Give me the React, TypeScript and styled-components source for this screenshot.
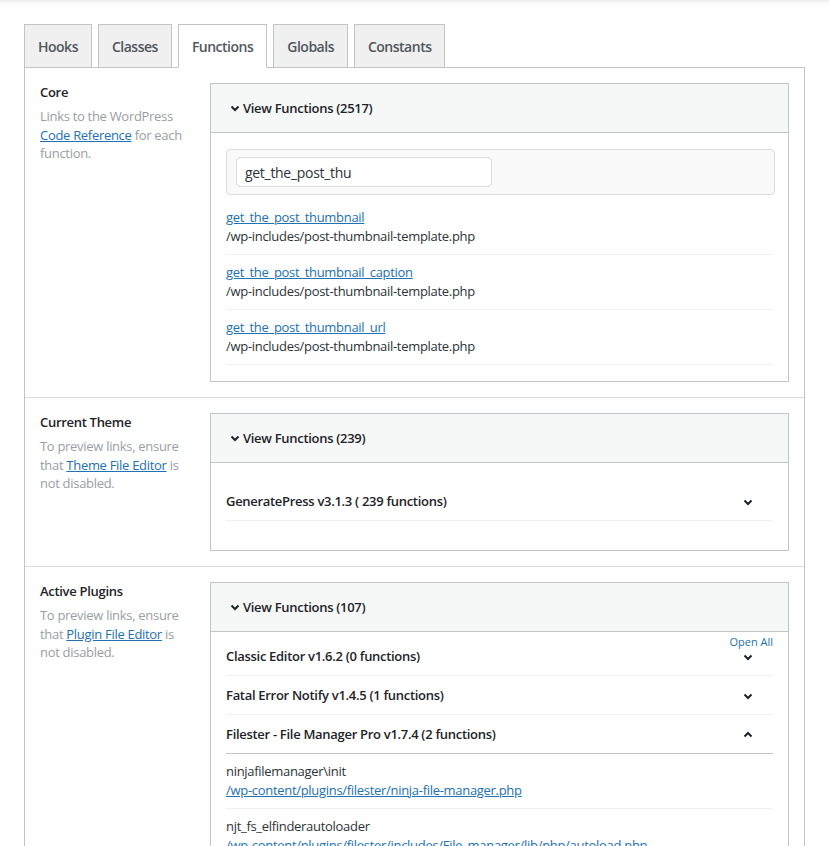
import styled, { createGlobalStyle } from "styled-components";

const GlobalStyle = createGlobalStyle`
  html, body {
    margin: 0;
    padding: 0;
    overflow: hidden;
    background: #fff;
  }
  body {
    font-family: "Open Sans", "Noto Sans", Arial, sans-serif;
    font-size: 13px;
    color: #2c3338;
    letter-spacing: -0.3px;
  }
  * { box-sizing: border-box; }
`;

const tabs = ["Hooks", "Classes", "Functions", "Globals", "Constants"];

const coreResults = [
  { name: "get_the_post_thumbnail", file: "/wp-includes/post-thumbnail-template.php" },
  { name: "get_the_post_thumbnail_caption", file: "/wp-includes/post-thumbnail-template.php" },
  { name: "get_the_post_thumbnail_url", file: "/wp-includes/post-thumbnail-template.php" },
];

const filesterItems = [
  { name: "ninjafilemanager\\init", file: "/wp-content/plugins/filester/ninja-file-manager.php" },
  { name: "njt_fs_elfinderautoloader", file: "/wp-content/plugins/filester/includes/File_manager/lib/php/autoload.php" },
];

const Chevron = ({ up }: { up?: boolean }) => (
  <ChevronSvg viewBox="0 0 10 10" width="10" height="10">
    <polyline
      points={up ? "1.5,6.5 5,3 8.5,6.5" : "1.5,3.5 5,7 8.5,3.5"}
      fill="none"
      stroke="#1d2327"
      strokeWidth="2"
    />
  </ChevronSvg>
);

const App = () => {
  return (
    <>
      <GlobalStyle />
      <Page>
        <TabBar>
          {tabs.map((t) => (
            <Tab key={t} $active={t === "Functions"}>{t}</Tab>
          ))}
        </TabBar>
        <Panel>
          {/* Core */}
          <Row>
            <Aside>
              <Label>Core</Label>
              <Desc>
                Links to the WordPress <DescLink href="#">Code Reference</DescLink> for each function.
              </Desc>
            </Aside>
            <Box>
              <BoxHeader>
                <Chevron /> View Functions (2517)
              </BoxHeader>
              <BoxBody $top={16} $bottom={16}>
                <SearchArea>
                  <SearchInput type="text" defaultValue="get_the_post_thu" />
                </SearchArea>
                <ResultList>
                  {coreResults.map((r) => (
                    <ResultItem key={r.name}>
                      <ResultLink href="#">{r.name}</ResultLink>
                      <ResultPath>{r.file}</ResultPath>
                    </ResultItem>
                  ))}
                </ResultList>
              </BoxBody>
            </Box>
          </Row>

          {/* Current theme */}
          <Row>
            <Aside>
              <Label>Current Theme</Label>
              <Desc>
                To preview links, ensure that <DescLink href="#">Theme File Editor</DescLink> is not disabled.
              </Desc>
            </Aside>
            <Box>
              <BoxHeader>
                <Chevron /> View Functions (239)
              </BoxHeader>
              <BoxBody $top={19} $bottom={29}>
                <AccHead>
                  <AccTitle>GeneratePress v3.1.3 ( 239 functions)</AccTitle>
                  <Chevron />
                </AccHead>
              </BoxBody>
            </Box>
          </Row>

          {/* Active plugins */}
          <Row>
            <Aside>
              <Label>Active Plugins</Label>
              <Desc>
                To preview links, ensure that <DescLink href="#">Plugin File Editor</DescLink> is not disabled.
              </Desc>
            </Aside>
            <Box>
              <BoxHeader>
                <Chevron /> View Functions (107)
              </BoxHeader>
              <BoxBody $top={5} $bottom={16}>
                <OpenAllBar>
                  <OpenAll href="#">Open All</OpenAll>
                </OpenAllBar>
                <AccHead>
                  <AccTitle>Classic Editor v1.6.2 (0 functions)</AccTitle>
                  <Chevron />
                </AccHead>
                <AccHead>
                  <AccTitle>Fatal Error Notify v1.4.5 (1 functions)</AccTitle>
                  <Chevron />
                </AccHead>
                <AccHead $open>
                  <AccTitle>Filester - File Manager Pro v1.7.4 (2 functions)</AccTitle>
                  <Chevron up />
                </AccHead>
                {filesterItems.map((f) => (
                  <ResultItem key={f.name}>
                    <ResultPath>{f.name}</ResultPath>
                    <ResultLink href="#">{f.file}</ResultLink>
                  </ResultItem>
                ))}
              </BoxBody>
            </Box>
          </Row>
        </Panel>
      </Page>
    </>
  );
};

const Page = styled.div`
  min-height: 846px;
  padding: 24px 24px 0;
  background: linear-gradient(to bottom, #ededee 0, #fafafa 3px, #fff 7px);
`;

const TabBar = styled.div`
  display: flex;
  gap: 6px;
  margin-bottom: -1px;
  position: relative;
  z-index: 1;
`;

const Tab = styled.div<{ $active?: boolean }>`
  height: 44px;
  display: flex;
  align-items: center;
  padding: 0 13px;
  font-size: 14px;
  font-weight: 600;
  letter-spacing: -0.5px;
  color: #50575e;
  background: ${(p) => (p.$active ? "#fff" : "#f0f0f1")};
  border: 1px solid #c3c4c7;
  border-bottom-color: ${(p) => (p.$active ? "#fff" : "#c3c4c7")};
  cursor: pointer;
`;

const Panel = styled.div`
  border: 1px solid #c3c4c7;
  background: #fff;
`;

const Row = styled.div`
  display: grid;
  grid-template-columns: 170px 1fr;
  padding: 15px;
  border-bottom: 1px solid #dcdcde;
`;

const Aside = styled.div`
  padding-right: 16px;
`;

const Label = styled.div`
  font-weight: 600;
  color: #1d2327;
  line-height: 19px;
`;

const Desc = styled.div`
  margin-top: 5px;
  line-height: 18.5px;
  color: #9a9ea3;
`;

const DescLink = styled.a`
  color: #2271b1;
  text-decoration: underline;
`;

const Box = styled.div`
  border: 1px solid #c3c4c7;
  background: #fff;
`;

const BoxHeader = styled.div`
  height: 49px;
  display: flex;
  align-items: center;
  gap: 3px;
  padding: 0 19px;
  background: #f6f7f7;
  border-bottom: 1px solid #c3c4c7;
  font-weight: 600;
  color: #1d2327;
`;

const BoxBody = styled.div<{ $top: number; $bottom: number }>`
  padding: ${(p) => p.$top}px 15px ${(p) => p.$bottom}px 15px;
`;

const SearchArea = styled.div`
  padding: 7px 9px;
  margin-right: -2px;
  background: #f9f9f9;
  border: 1px solid #dcdcde;
  border-radius: 4px;
`;

const SearchInput = styled.input`
  width: 256px;
  height: 30px;
  padding: 0 8px;
  border: 1px solid #dcdcde;
  border-radius: 4px;
  font-family: inherit;
  font-size: 14px;
  letter-spacing: -0.3px;
  color: #2c3338;
  outline: none;
`;

const ResultList = styled.div`
  margin-top: 5px;
`;

const ResultItem = styled.div`
  display: flex;
  flex-direction: column;
  align-items: flex-start;
  padding: 8px 0;
  line-height: 19px;
  border-bottom: 1px solid #f0f0f1;
`;

const ResultLink = styled.a`
  color: #2271b1;
  text-decoration: underline;
`;

const ResultPath = styled.span`
  color: #2c3338;
`;

const OpenAllBar = styled.div`
  display: flex;
  justify-content: flex-end;
  height: 14px;
  margin-top: -2px;
  margin-bottom: -12px;
  position: relative;
`;

const OpenAll = styled.a`
  font-size: 11px;
  line-height: 14px;
  color: #2271b1;
  text-decoration: none;
  letter-spacing: 0;
`;

const AccHead = styled.div<{ $open?: boolean }>`
  display: flex;
  align-items: center;
  justify-content: space-between;
  padding: 10px 20px 9px 0;
  line-height: 19px;
  border-bottom: 1px solid ${(p) => (p.$open ? "#c3c4c7" : "#f0f0f1")};
  cursor: pointer;
`;

const AccTitle = styled.span`
  font-weight: 600;
  color: #1d2327;
`;

const ChevronSvg = styled.svg`
  display: block;
  flex-shrink: 0;
`;

export default App;
